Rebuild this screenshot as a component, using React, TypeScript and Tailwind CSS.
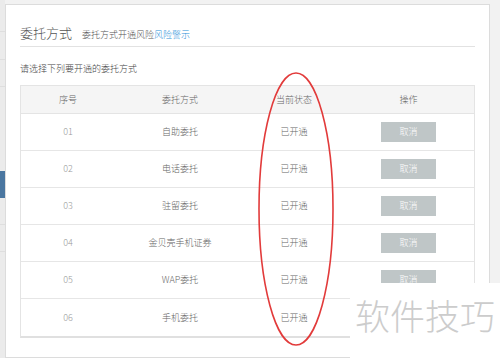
import React from "react";

const rows = [
  { no: "01", name: "自助委托" },
  { no: "02", name: "电话委托" },
  { no: "03", name: "驻留委托" },
  { no: "04", name: "金贝壳手机证券" },
  { no: "05", name: "WAP委托" },
  { no: "06", name: "手机委托" },
];

const font = { fontFamily: '"Noto Sans CJK SC", "Noto Sans", sans-serif' };

export default function App() {
  return (
    <div
      className="relative w-[500px] h-[358px] overflow-hidden bg-[#f2f2f2] flex font-light"
      style={font}
    >
      {/* sidebar strip */}
      <div className="w-[5px] shrink-0 bg-[#ebebeb] flex flex-col">
        <div className="h-[32px] border-b border-[#dedede]" />
        <div className="h-[28px] border-b border-[#dedede]" />
        <div className="h-[27px] border-b border-[#dedede]" />
        <div className="h-[84px]" />
        <div className="h-[27px] bg-[#4a76a0]" />
        <div className="h-[27px] border-b border-[#dedede]" />
        <div className="h-[27px] border-b border-[#dedede]" />
      </div>

      {/* main panel */}
      <div className="mt-[4px] w-[485px] shrink-0 bg-white border border-[#dcdcdc] px-[14px] pt-[18px]">
        <div className="flex items-baseline gap-[10px] pb-[4px] border-b border-[#e2e2e2] h-[24px]">
          <span className="text-[13px] leading-[20px] text-[#555]">委托方式</span>
          <span className="text-[9px] text-[#555]">
            委托方式开通风险<span className="text-[#2a8fd8]">风险警示</span>
          </span>
        </div>
        <div className="mt-[15px] text-[9px] leading-[14px] text-[#444]">
          请选择下列要开通的委托方式
        </div>
        <div className="mt-[9px] border border-[#e4e4e4] border-b-2 border-b-[#e0e0e0]">
          <div className="flex h-[28px] items-center bg-[#f5f5f5] border-b border-[#e4e4e4] text-[9px] text-[#666]">
            <div className="w-[94px] text-center">序号</div>
            <div className="w-[130px] text-center">委托方式</div>
            <div className="w-[98px] text-center">当前状态</div>
            <div className="flex-1 text-center">操作</div>
          </div>
          {rows.map((r, i) => (
            <div
              key={r.no}
              className={`flex h-[37px] items-center ${i < rows.length - 1 ? "border-b border-[#e6e6e6]" : ""}`}
            >
              <div className="w-[94px] text-center text-[9px] text-[#999]">{r.no}</div>
              <div className="w-[130px] text-center text-[9px] text-[#666]">{r.name}</div>
              <div className="w-[98px] text-center text-[9px] text-[#666]">已开通</div>
              <div className="flex-1 flex justify-center">
                <div className="w-[55px] h-[20px] bg-[#bfc6c7] text-white text-[9px] flex items-center justify-center">
                  取消
                </div>
              </div>
            </div>
          ))}
        </div>
      </div>

      {/* red ellipse annotation */}
      <svg className="absolute left-0 top-0 pointer-events-none" width="500" height="358">
        <ellipse cx="296" cy="209" rx="37" ry="136" fill="none" stroke="#e23b3b" strokeWidth="1.6" />
      </svg>

      {/* watermark */}
      <div className="absolute left-[350px] top-[283px] w-[150px] h-[75px] bg-white">
        <div className="pl-[5px] pt-[12px] text-[35px] leading-[40px] text-[#cccccc] whitespace-nowrap">
          软件技巧
        </div>
      </div>
    </div>
  );
}
